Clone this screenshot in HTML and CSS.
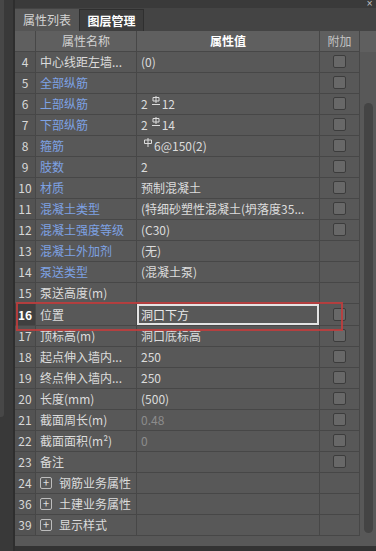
FILE: index.html
```html
<!DOCTYPE html>
<html lang="zh-CN">
  <head>
    <meta charset="UTF-8" />
    <title>属性列表</title>
    <link rel="stylesheet" href="styles.css">
  </head>
  <body>
    <div class="window">
      <div class="gutter"><div class="gutter-bar"></div></div>

      <div class="main">
        <div class="topbar"><span class="close">×</span></div>

        <!-- Tabs -->
        <div class="tabs">
          <div class="tab active">属性列表</div>
          <div class="tab other">图层管理</div>
        </div>

        <!-- Property grid -->
        <div class="grid-wrap">
          <table class="props">
            <colgroup>
              <col class="c-num" /><col class="c-name" /><col class="c-val" /><col class="c-add" />
            </colgroup>
            <thead>
              <tr>
                <th></th>
                <th class="h-name">属性名称</th>
                <th class="h-val">属性值</th>
                <th class="h-add">附加</th>
              </tr>
            </thead>
            <tbody>
              <tr><td class="num">4</td><td class="name">中心线距左墙...</td><td class="val">(0)</td><td class="add"><span class="chk"></span></td></tr>
              <tr><td class="num">5</td><td class="name link">全部纵筋</td><td class="val"></td><td class="add"><span class="chk"></span></td></tr>
              <tr><td class="num">6</td><td class="name link">上部纵筋</td><td class="val">2<svg class="sym" viewBox="0 0 10 9"><path d="M2 1.5h6v3.5H2zM5 0v7M1 8.5h8" /></svg>12</td><td class="add"><span class="chk"></span></td></tr>
              <tr><td class="num">7</td><td class="name link">下部纵筋</td><td class="val">2<svg class="sym" viewBox="0 0 10 9"><path d="M2 1.5h6v3.5H2zM5 0v7M1 8.5h8" /></svg>14</td><td class="add"><span class="chk"></span></td></tr>
              <tr><td class="num">8</td><td class="name link">箍筋</td><td class="val"><svg class="sym lead" viewBox="0 0 10 9"><path d="M1.5 2h7v3.5h-7zM5 0v9" /></svg>6@150(2)</td><td class="add"><span class="chk"></span></td></tr>
              <tr><td class="num">9</td><td class="name link">肢数</td><td class="val">2</td><td class="add"><span class="chk"></span></td></tr>
              <tr><td class="num">10</td><td class="name link">材质</td><td class="val">预制混凝土</td><td class="add"><span class="chk"></span></td></tr>
              <tr><td class="num">11</td><td class="name link">混凝土类型</td><td class="val">(特细砂塑性混凝土(坍落度35...</td><td class="add"><span class="chk"></span></td></tr>
              <tr><td class="num">12</td><td class="name link">混凝土强度等级</td><td class="val">(C30)</td><td class="add"><span class="chk"></span></td></tr>
              <tr><td class="num">13</td><td class="name link">混凝土外加剂</td><td class="val">(无)</td><td class="add"></td></tr>
              <tr><td class="num">14</td><td class="name link">泵送类型</td><td class="val">(混凝土泵)</td><td class="add"></td></tr>
              <tr><td class="num">15</td><td class="name">泵送高度(m)</td><td class="val"></td><td class="add"></td></tr>
              <tr class="current"><td class="num">16</td><td class="name">位置</td><td class="val edit"><div class="editor">洞口下方</div></td><td class="add"><span class="chk"></span></td></tr>
              <tr><td class="num">17</td><td class="name">顶标高(m)</td><td class="val">洞口底标高</td><td class="add"><span class="chk"></span></td></tr>
              <tr><td class="num">18</td><td class="name">起点伸入墙内...</td><td class="val">250</td><td class="add"><span class="chk"></span></td></tr>
              <tr><td class="num">19</td><td class="name">终点伸入墙内...</td><td class="val">250</td><td class="add"><span class="chk"></span></td></tr>
              <tr><td class="num">20</td><td class="name">长度(mm)</td><td class="val">(500)</td><td class="add"><span class="chk"></span></td></tr>
              <tr><td class="num">21</td><td class="name">截面周长(m)</td><td class="val muted">0.48</td><td class="add"><span class="chk"></span></td></tr>
              <tr><td class="num">22</td><td class="name">截面面积(m²)</td><td class="val muted">0</td><td class="add"><span class="chk"></span></td></tr>
              <tr><td class="num">23</td><td class="name">备注</td><td class="val"></td><td class="add"><span class="chk"></span></td></tr>
              <tr><td class="num">24</td><td class="name group"><span class="expand">+</span>钢筋业务属性</td><td class="val"></td><td class="add"></td></tr>
              <tr><td class="num">36</td><td class="name group"><span class="expand">+</span>土建业务属性</td><td class="val"></td><td class="add"></td></tr>
              <tr><td class="num">39</td><td class="name group"><span class="expand">+</span>显示样式</td><td class="val"></td><td class="add"></td></tr>
            </tbody>
          </table>

          <div class="scroll">
            <div class="scroll-head"></div>
            <div class="thumb"></div>
          </div>

          <!-- selection frame over row 16 -->
          <div class="focus-frame"></div>
        </div>

        <div class="footer"></div>
      </div>
    </div>
  </body>
</html>
```

FILE: styles.css
```css
* {
  margin: 0;
  padding: 0;
  box-sizing: border-box;
}

body {
  font-family: "Noto Sans CJK SC", "Noto Sans", sans-serif;
  font-size: 12px;
  background: #3a3a3a;
  color: #dcdcdc;
  width: 376px;
  height: 551px;
  overflow: hidden;
}

.window {
  display: flex;
  height: 551px;
}

/* left dock edge */
.gutter {
  width: 15px;
  background: #393939;
  border-right: 2px solid #2e2e2e;
}

.gutter-bar {
  width: 4px;
  height: 417px;
  background: #474747;
  border-bottom-right-radius: 3px;
}

.main {
  flex: 1;
  display: flex;
  flex-direction: column;
}

.topbar {
  height: 8px;
  background: #3a3a3a;
  display: flex;
  justify-content: flex-end;
  align-items: center;
  padding-right: 3px;
}

.close {
  font-family: "DejaVu Sans", sans-serif;
  font-size: 8px;
  line-height: 8px;
  color: #c8c8c8;
}

/* Tabs */
.tabs {
  height: 23px;
  background: #444;
  display: flex;
  align-items: flex-end;
}

.tab {
  height: 22px;
  line-height: 21px;
  text-align: center;
}

.tab.active {
  width: 64px;
  background: #555;
  color: #d4d4d4;
}

.tab.other {
  width: 65px;
  background: #3d3d3d;
  border: 1px solid #2f2f2f;
  border-bottom: none;
  color: #fff;
  font-weight: bold;
}

/* Grid */
.grid-wrap {
  flex: 1;
  display: flex;
  position: relative;
  background: #585858;
}

.props {
  width: 345px;
  border-collapse: separate;
  border-spacing: 0;
  table-layout: fixed;
  align-self: flex-start;
}

.c-num { width: 21px; }
.c-name { width: 101px; }
.c-val { width: 183px; }
.c-add { width: 40px; }

.props th,
.props td {
  height: 21px;
  padding: 0;
  border-right: 1px solid #474747;
  border-bottom: 1px solid #474747;
  white-space: nowrap;
  overflow: hidden;
  line-height: 20px;
}

.props th {
  background: #5f5f5f;
  font-weight: normal;
  text-align: center;
}

.h-name { color: #d2d2d2; }
.h-val { color: #fff; font-weight: bold !important; }
.h-add { color: #c4c4c4; }

.props td {
  background: #585858;
}

.num {
  text-align: center;
  color: #d8d8d8;
  background: #535353 !important;
}

.name {
  padding-left: 4px !important;
  color: #dcdcdc;
}

.name.link {
  color: #7ea2e4;
}

.val {
  padding-left: 4px !important;
  color: #dcdcdc;
}

.val.muted {
  color: #8c8c8c;
}

.sym {
  width: 10px;
  height: 9px;
  margin: 0 1px 0 3px;
  vertical-align: 4px;
  fill: none;
  stroke: #dcdcdc;
  stroke-width: 1;
}

.sym.lead {
  margin-left: 2px;
}

.add {
  text-align: center;
}

.chk {
  display: inline-block;
  width: 13px;
  height: 13px;
  margin-top: 3px;
  vertical-align: top;
  background: #686868;
  border: 1px solid #3c3c3c;
  border-radius: 2px;
}

.group {
  padding-left: 4px;
}

.expand {
  display: inline-block;
  width: 12px;
  height: 12px;
  margin: 4px 7px 0 0;
  vertical-align: top;
  border: 1px solid #bdbdbd;
  border-radius: 2px;
  font-size: 11px;
  line-height: 9px;
  text-align: center;
  color: #e0e0e0;
}

/* current row */
.current .num {
  background: #3f3f3f !important;
  color: #fff;
  font-weight: bold;
}

.val.edit {
  padding-left: 0 !important;
}

.editor {
  height: 21px;
  border: 2px solid #e4e4e4;
  padding-left: 2px;
  line-height: 17px;
  color: #e8e8e8;
}

.focus-frame {
  position: absolute;
  left: 1px;
  top: 271px;
  width: 327px;
  height: 29px;
  border: 2px solid rgba(196, 60, 60, 0.85);
  pointer-events: none;
}

/* scrollbar */
.scroll {
  width: 16px;
  background: #585858;
}

.scroll-head {
  height: 21px;
  background: #5f5f5f;
  margin-bottom: 51px;
}

.thumb {
  width: 9px;
  height: 430px;
  margin-left: 4px;
  background: #444;
  border-radius: 5px;
}

.footer {
  height: 5px;
  background: #333;
}
```
